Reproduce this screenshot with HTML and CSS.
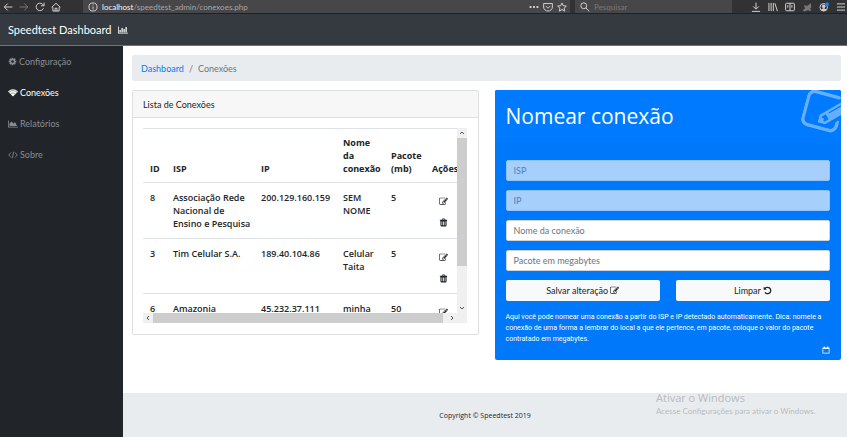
FILE: index.html
```html
<!DOCTYPE html>
<html lang="pt-BR">
<head>
<meta charset="utf-8">
<title>Speedtest Dashboard</title>
<link rel="stylesheet" href="styles.css">
</head>
<body>
<svg class="sprite" aria-hidden="true">
  <symbol id="edit" viewBox="0 0 1792 1792"><path d="M888 1184l116-116-152-152-116 116v56h96v96h56zm440-720q-16-16-33 1l-350 350q-17 17-1 33t33-1l350-350q17-17 1-33zm80 594v190q0 119-84.500 203.500t-203.500 84.500h-832q-119 0-203.500-84.500t-84.500-203.500v-832q0-119 84.500-203.500t203.500-84.500h832q63 0 117 25 15 7 18 23 3 17-9 29l-49 49q-14 14-32 8-23-6-45-6h-832q-66 0-113 47t-47 113v832q0 66 47 113t113 47h832q66 0 113-47t47-113v-126q0-13 9-22l64-64q15-15 35-7t20 29zm-96-738l288 288-672 672h-288v-288zm444 132l-92 92-288-288 92-92q28-28 68-28t68 28l152 152q28 28 28 68t-28 68z"/></symbol>
  <symbol id="cog" viewBox="0 0 1792 1792"><path d="M1152 896q0-106-75-181t-181-75-181 75-75 181 75 181 181 75 181-75 75-181zm512-109v222q0 12-8 23t-20 13l-185 28q-19 54-39 91 35 50 107 138 10 12 10 25t-9 23q-27 37-99 108t-94 71q-12 0-26-9l-138-108q-44 23-91 38-16 136-29 186-7 28-36 28h-222q-14 0-24.500-8.500t-11.500-21.500l-28-184q-49-16-90-37l-141 107q-10 9-25 9-14 0-25-11-126-114-165-168-7-10-7-23 0-12 8-23 15-21 51-66.500t54-70.500q-27-50-41-99l-183-27q-13-2-21-12.500t-8-23.500v-222q0-12 8-23t19-13l186-28q14-46 39-92-40-57-107-138-10-12-10-24 0-10 9-23 26-36 98.500-107.500t94.500-71.500q13 0 26 10l138 107q44-23 91-38 16-136 29-186 7-28 36-28h222q14 0 24.500 8.500t11.500 21.500l28 184q49 16 90 37l142-107q9-9 24-9 13 0 25 10 129 119 165 170 7 8 7 22 0 12-8 23-15 21-51 66.500t-54 70.500q26 50 41 98l183 28q13 2 21 12.500t8 23.500z"/></symbol>
  <symbol id="undo" viewBox="0 0 1792 1792"><path d="M1664 896q0 156-61 298t-164 245-245 164-298 61q-172 0-327-72.500t-264-204.500q-7-10-6.500-22.500t8.500-20.500l137-138q10-9 25-9 16 2 23 12 73 95 179 147t225 52q104 0 198.500-40.500t163.500-109.500 109.500-163.500 40.500-198.500-40.500-198.500-109.500-163.500-163.500-109.500-198.500-40.500q-98 0-188 35.500t-160 101.500l137 138q31 30 14 69-17 40-59 40h-448q-26 0-45-19t-19-45v-448q0-42 40-59 39-17 69 14l130 129q107-101 244.500-156.500t284.500-55.500q156 0 298 61t245 164 164 245 61 298z"/></symbol>
  <symbol id="trash" viewBox="0 0 16 16"><path fill-rule="evenodd" d="M1.500 3h3.300L6 1h4l1.200 2h3.300v1.800h-1V13q0 2-1.500 2H4q-1.500 0-1.500-2V4.800h-1zM6 3h4l-.5-.8h-3zM4.500 6v7h1.300V6zm2.800 0v7h1.400V6zm2.900 0v7h1.300V6z"/></symbol>
  <symbol id="wifi" viewBox="0 0 20 16"><path d="M0 5Q10-4 20 5L10 15z"/><path d="M2 6.500Q10-.5 18 6.500M5 9.500q5-4 10 0" fill="none" stroke="#212529" stroke-width=".9"/></symbol>
  <symbol id="area" viewBox="0 0 20 16"><path d="M0 1h1.500v12.500H20V15H0zM3 12V7l4-4 4 4 3-3 4 8z"/></symbol>
  <symbol id="code" viewBox="0 0 20 16"><path d="M6 3L1.500 8 6 13M14 3l4.500 5L14 13M11.500 1.500l-3 13" fill="none" stroke="currentColor" stroke-width="1.700"/></symbol>
  <symbol id="bars" viewBox="0 0 20 16"><path d="M0 1h1.500v12.500H20V15H0zM3 8h2.500v4.500H3zM7 4h2.500v8.500H7zM11 6h2.500v6.500H11zM15 2h2.500v10.500H15z"/></symbol>
  <symbol id="calendar" viewBox="0 0 16 16"><path fill-rule="evenodd" d="M1 3h2.500V1h2v2h5V1h2v2H15v12H1zm1.500 3v7.500h11V6z"/></symbol>
  <symbol id="back" viewBox="0 0 16 16"><path d="M15 8H2M7.500 2.500L2 8l5.500 5.500"/></symbol>
  <symbol id="forward" viewBox="0 0 16 16"><path d="M1 8h13M8.500 2.500L14 8l-5.500 5.500"/></symbol>
  <symbol id="reload" viewBox="0 0 16 16"><path d="M13.500 10A6 6 0 1 1 12 3.500L14 5.500M14.500 1v5h-5"/></symbol>
  <symbol id="home" viewBox="0 0 16 16"><path d="M1 8.500L8 2l7 6.500M3 8v6.500h10V8M6.500 14.500V10h3v4.500"/></symbol>
  <symbol id="info" viewBox="0 0 16 16"><circle cx="8" cy="8" r="6.500"/><path d="M8 7v5M8 4v1.500"/></symbol>
  <symbol id="dots" viewBox="0 0 16 16"><path d="M1 8h3M6.500 8h3M12 8h3" stroke-width="3"/></symbol>
  <symbol id="pocket" viewBox="0 0 16 16"><path d="M1 2.500h14V8A7 6.500 0 0 1 1 8zM4.500 6.500L8 10l3.500-3.500"/></symbol>
  <symbol id="star" viewBox="0 0 16 16"><path d="M8 1.500l2 4.500 5 .5-3.700 3.300 1 4.800L8 12l-4.300 2.600 1-4.800L1 6.500 6 6z"/></symbol>
  <symbol id="search" viewBox="0 0 16 16"><circle cx="6" cy="6" r="4.700"/><path d="M9.500 9.500L15 15"/></symbol>
  <symbol id="download" viewBox="0 0 16 16"><path d="M8 1v10M3.500 7L8 11.500 12.500 7M1.500 15h13"/></symbol>
  <symbol id="library" viewBox="0 0 16 16"><path d="M1.500 1.500v13M5 1.500v13M8.500 1.500v13M11 2l4 12.500"/></symbol>
  <symbol id="sidebar" viewBox="0 0 16 16"><rect x="1" y="2" width="14" height="12" rx="1.500"/><path d="M8 2v12M4.500 5v4M11 5v4"/></symbol>
  <symbol id="addon" viewBox="0 0 16 16"><path fill="currentColor" stroke="none" d="M9 6l5-4.500L15 8l-2 2.500 2 4-6-1.500-5 2-3-2 4-2.500L3 5z"/></symbol>
  <symbol id="account" viewBox="0 0 16 16"><circle cx="7.500" cy="8.500" r="6"/><circle cx="7.500" cy="7" r="2.200" fill="currentColor"/><path fill="currentColor" d="M4 12.500q3.500-4 7 0-3.500 2.500-7 0z"/><circle cx="13" cy="3.500" r="3" fill="#0a84ff" stroke="none"/></symbol>
  <symbol id="menu" viewBox="0 0 16 16"><path d="M1.500 3h13M1.500 8h13M1.500 13h13"/></symbol>
</svg>

<div class="browser">
  <div class="tools">
    <button aria-label="Voltar"><svg><use href="#back"/></svg></button>
    <button class="dim" aria-label="Avançar"><svg><use href="#forward"/></svg></button>
    <button aria-label="Recarregar"><svg><use href="#reload"/></svg></button>
    <button aria-label="Início"><svg><use href="#home"/></svg></button>
  </div>
  <div class="address">
    <svg><use href="#info"/></svg>
    <span class="url"><b>localhost</b>/speedtest_admin/conexoes.php</span>
    <button aria-label="Ações da página"><svg><use href="#dots"/></svg></button>
    <button aria-label="Pocket"><svg><use href="#pocket"/></svg></button>
    <button aria-label="Favorito"><svg><use href="#star"/></svg></button>
  </div>
  <label class="search"><svg><use href="#search"/></svg><input type="text" placeholder="Pesquisar" aria-label="Pesquisar"></label>
  <div class="tools end">
    <button aria-label="Downloads"><svg><use href="#download"/></svg></button>
    <button aria-label="Biblioteca"><svg><use href="#library"/></svg></button>
    <button aria-label="Painel lateral"><svg><use href="#sidebar"/></svg></button>
    <button class="dim" aria-label="Extensão"><svg><use href="#addon"/></svg></button>
    <button aria-label="Conta"><svg><use href="#account"/></svg></button>
    <button aria-label="Menu"><svg><use href="#menu"/></svg></button>
  </div>
</div>

<header class="navbar"><a href="#">Speedtest Dashboard</a><svg class="wide"><use href="#bars"/></svg></header>

<div class="shell">
  <nav class="sidebar">
    <a href="#"><svg class="icon"><use href="#cog"/></svg>Configuração</a>
    <a href="#" class="active"><svg class="wide"><use href="#wifi"/></svg>Conexões</a>
    <a href="#"><svg class="wide"><use href="#area"/></svg>Relatórios</a>
    <a href="#"><svg class="wide"><use href="#code"/></svg>Sobre</a>
  </nav>
  <div class="content">
    <main>
      <div class="breadcrumb"><a href="#">Dashboard</a><span>/</span><span>Conexões</span></div>
      <div class="columns">
        <section class="card">
          <h2>Lista de Conexões</h2>
          <div class="scroller">
            <div class="view">
              <table>
                <colgroup><col class="c-id"><col class="c-isp"><col class="c-ip"><col class="c-name"><col class="c-plan"><col class="c-act"></colgroup>
                <thead><tr><th>ID</th><th>ISP</th><th>IP</th><th>Nome da conexão</th><th>Pacote (mb)</th><th>Ações</th></tr></thead>
                <tbody>
                  <tr><td>8</td><td>Associação Rede Nacional de Ensino e Pesquisa</td><td>200.129.160.159</td><td>SEM NOME</td><td>5</td><td class="actions"><button aria-label="Editar"><svg class="icon"><use href="#edit"/></svg></button><button aria-label="Excluir"><svg class="icon"><use href="#trash"/></svg></button></td></tr>
                  <tr><td>3</td><td>Tim Celular S.A.</td><td>189.40.104.86</td><td>Celular Taita</td><td>5</td><td class="actions"><button aria-label="Editar"><svg class="icon"><use href="#edit"/></svg></button><button aria-label="Excluir"><svg class="icon"><use href="#trash"/></svg></button></td></tr>
                  <tr><td>6</td><td>Amazonia</td><td>45.232.37.111</td><td>minha</td><td>50</td><td class="actions"><button aria-label="Editar"><svg class="icon"><use href="#edit"/></svg></button><button aria-label="Excluir"><svg class="icon"><use href="#trash"/></svg></button></td></tr>
                </tbody>
              </table>
            </div>
            <div class="bar vertical"><svg viewBox="0 0 10 10"><path d="M3 6l2-2 2 2"/></svg><i></i><svg viewBox="0 0 10 10"><path d="M3 4l2 2 2-2"/></svg></div>
            <div class="bar horizontal"><svg viewBox="0 0 10 10"><path d="M6 3L4 5l2 2"/></svg><i></i><svg viewBox="0 0 10 10"><path d="M4 3l2 2-2 2"/></svg></div>
            <div class="corner"></div>
          </div>
        </section>
        <section class="panel">
          <div class="panel-head"><h1>Nomear conexão</h1><svg class="ghost"><use href="#edit"/></svg></div>
          <form class="panel-body">
            <input type="text" placeholder="ISP" aria-label="ISP" disabled>
            <input type="text" placeholder="IP" aria-label="IP" disabled>
            <input type="text" placeholder="Nome da conexão" aria-label="Nome da conexão">
            <input type="text" placeholder="Pacote em megabytes" aria-label="Pacote em megabytes">
            <div class="buttons">
              <button type="submit">Salvar alteração <svg class="icon"><use href="#edit"/></svg></button>
              <button type="reset">Limpar <svg class="icon"><use href="#undo"/></svg></button>
            </div>
            <p>Aqui você pode nomear uma conexão a partir do ISP e IP detectado automaticamente. Dica: nomeie a conexão de uma forma a lembrar do local a que ele pertence, em pacote, coloque o valor do pacote contratado em megabytes.</p>
            <svg class="calendar"><use href="#calendar"/></svg>
          </form>
        </section>
      </div>
    </main>
    <footer>Copyright © Speedtest 2019</footer>
  </div>
</div>
<aside class="watermark"><strong>Ativar o Windows</strong><span>Acesse Configurações para ativar o Windows.</span></aside>
</body>
</html>
```
FILE: styles.css
```css
* { box-sizing: border-box; }
body {
  margin: 0;
  min-height: 100vh;
  display: flex;
  flex-direction: column;
  overflow: hidden;
  background: #fff;
  color: #212529;
  font: 9px/13px Lato, "Noto Sans", sans-serif;
}
a { color: inherit; text-decoration: none; }
button, input { font: inherit; color: inherit; border: 0; margin: 0; padding: 0; background: none; }
h1, h2, p { margin: 0; font-weight: 400; }
svg { fill: currentColor; flex: none; }
.sprite { position: absolute; width: 0; height: 0; }
.icon { width: 9px; height: 9px; }
.wide { width: 10px; height: 8px; }

.browser {
  display: flex;
  height: 14px;
  padding-right: 1px;
  background: #323234;
  border-bottom: 1px solid #202124;
  color: #d0d0d2;
  font-size: 8px;
  line-height: 12px;
}
.browser svg { width: 10px; height: 10px; fill: none; stroke: currentColor; stroke-width: 1.6; display: block; }
.tools { display: flex; gap: 6px; align-items: center; width: 83px; padding-left: 3px; }
.tools .dim { color: #77777a; }
.tools.end { width: auto; margin-left: auto; padding: 0; gap: 7px; }
.address, .search { display: flex; align-items: center; background: #474749; }
.address { flex: 0 1 487px; gap: 4px; padding: 0 3px 0 5px; }
.url { flex: 1; color: #a5a5a8; }
.url b { color: #f5f5f7; font-weight: 400; }
.search { flex: 0 1 157px; gap: 4px; margin-left: 5px; padding-left: 5px; }
.search input { flex: 1; min-width: 0; }
.search input::placeholder { color: #78787b; opacity: 1; }

.navbar {
  display: flex;
  align-items: center;
  gap: 7px;
  height: 32px;
  padding: 0 8px;
  background: #343a40;
  border-bottom: 1px solid #6c757d;
  color: #fff;
  font-size: 11px;
}

.shell { display: flex; flex: 1; }
.sidebar { flex: 0 0 123px; background: #212529; color: #8b8d90; }
.sidebar a { display: flex; align-items: center; gap: 2px; height: 31px; padding-left: 8px; }
.sidebar .active { color: #fff; }
.content { display: flex; flex: 1; flex-direction: column; min-width: 0; }
main { flex: 1; padding: 9px 6px 0 9px; }
.breadcrumb { display: flex; gap: 5px; padding: 7px 9px 6px; background: #e9ecef; border-radius: 2px; color: #6c757d; }
.breadcrumb a { color: #007bff; }
.columns { display: grid; grid-template-columns: 1fr 1fr; gap: 16px; align-items: start; margin-top: 9px; }

.card { min-width: 0; border: 1px solid #dfdfdf; border-radius: 2px; }
.card h2 { padding: 7px 10px 6px; background: #f7f7f7; border-bottom: 1px solid #dfdfdf; font-size: 9px; }
.scroller { display: grid; grid-template: 185px 10px / 1fr 10px; margin: 10px 11px 11px 10px; }
.view { overflow: hidden; }
table { width: 325px; table-layout: fixed; border-collapse: collapse; font-family: "Open Sans", "Noto Sans", sans-serif; font-size: 9px; font-weight: 600; }
th, td { padding: 8px 1px 8px 7px; border-top: 1px solid #dee2e6; text-align: left; vertical-align: top; }
th { padding: 7px 4px 7px 7px; vertical-align: bottom; }
th:last-child { padding-right: 0; }
.c-id { width: 23px; }
.c-isp { width: 88px; }
.c-ip { width: 82px; }
.c-name { width: 48px; }
.c-plan { width: 41px; }
.actions button { display: block; height: 21px; padding: 5px 0 0 7px; }
.actions svg { display: block; }
td.actions { padding: 5px 0 7px 7px; }
.bar { display: flex; background: #f0f0f0; }
.bar svg { width: 10px; height: 10px; fill: none; stroke: #505050; }
.bar i { background: #cdcdcd; }
.vertical { flex-direction: column; justify-content: space-between; }
.vertical i { flex: 0 1 128px; margin-bottom: auto; }
.horizontal i { flex: 0 1 290px; margin-right: auto; }
.corner { background: #f0f0f0; }

.panel { min-width: 0; overflow: hidden; border-radius: 2px; background: #0078fa; color: #fff; }
.panel-head { display: flex; justify-content: space-between; height: 53px; padding-left: 11px; background: #007bff; }
.panel-head h1 { font-family: "Open Sans", "Noto Sans", sans-serif; font-size: 21px; line-height: 52px; }
.ghost { width: 48px; height: 48px; margin-right: -10px; opacity: .4; transform: rotate(15deg); }
.panel-body { display: flex; flex-direction: column; gap: 9px; padding: 17px 11px 6px; }
.panel-body input { width: 100%; height: 21px; padding: 0 7px; border: 1px solid #ced4da; border-radius: 2px; background: #fff; }
.panel-body input::placeholder { color: #6c757d; opacity: 1; }
.panel-body input:disabled { background: #a6cffb; border-color: #8ec2fb; }
.panel-body input:disabled::placeholder { color: #4d83b9; }
.buttons { display: grid; grid-template-columns: 1fr 1fr; gap: 16px; }
.buttons button { display: flex; align-items: center; justify-content: center; gap: 2px; height: 21px; border-radius: 2px; background: #f8f9fa; color: #212529; }
.panel-body p { margin-top: 2px; font-family: Roboto, "Open Sans", sans-serif; font-size: 7px; line-height: 11px; }
.calendar { width: 8px; height: 8px; margin-top: -8px; align-self: flex-end; }

footer { display: flex; align-items: center; justify-content: center; height: 44px; background: #e9ecef; font-family: "Open Sans", "Noto Sans", sans-serif; font-size: 7px; }
.watermark { position: absolute; left: calc(100% - 191px); bottom: 19px; color: #b9bbbd; font-size: 8px; line-height: 14px; white-space: nowrap; }
.watermark strong { display: block; font-family: "Open Sans", "Noto Sans", sans-serif; font-size: 11px; line-height: 13px; font-weight: 400; }
```
